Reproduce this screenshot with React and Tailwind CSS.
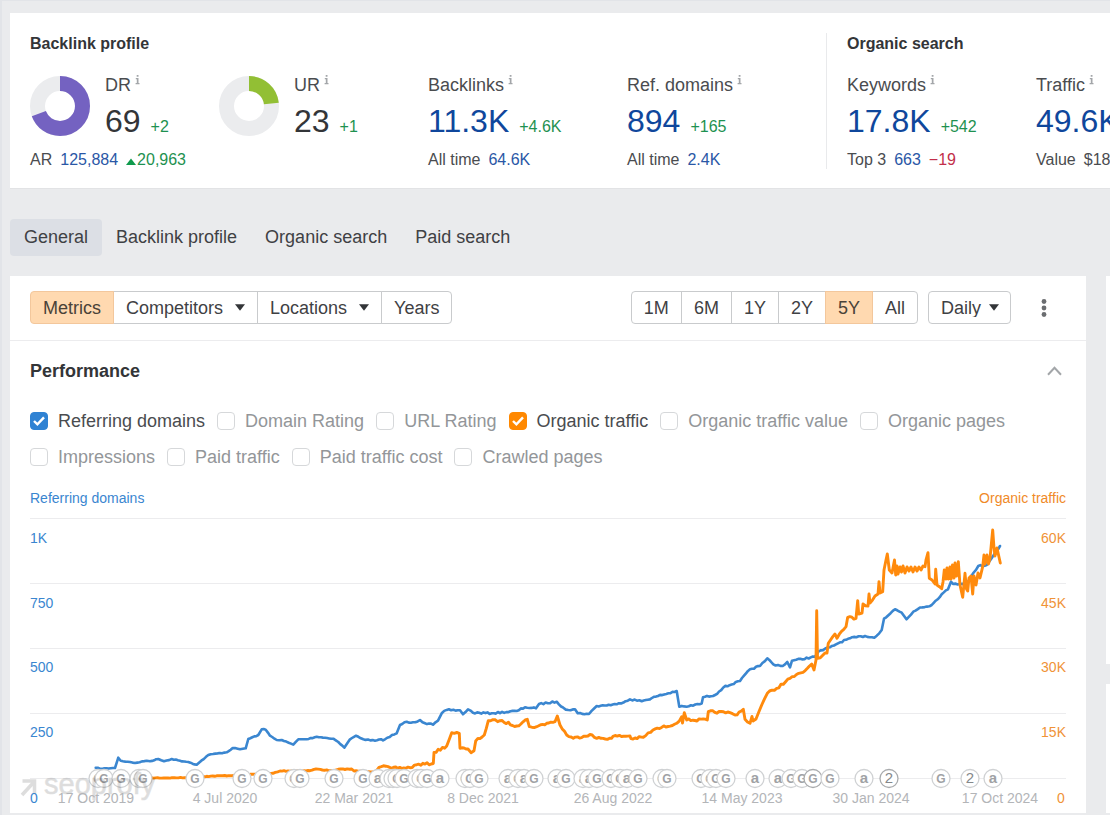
import React from "react";

const BLUE = "#3a86d0";
const ORANGE = "#ff8a0c";

function InfoIcon() {
  return (
    <svg className="h-[10px] w-[5px] shrink-0" viewBox="0 0 5 10" aria-hidden="true">
      <path d="M1.7 0h1.8v1.7H1.7zM0.8 3h2.7v5h1v1.3H0.6V8h1.2V4.3h-1z" fill="#a3a6a9" />
    </svg>
  );
}

function Donut({ value, color }) {
  const r = 22.5;
  const c = 2 * Math.PI * r;
  return (
    <svg className="mt-px size-[60px] shrink-0" viewBox="0 0 60 60" aria-hidden="true">
      <circle cx="30" cy="30" r={r} fill="none" stroke="#ebecee" strokeWidth="15" />
      <circle
        cx="30"
        cy="30"
        r={r}
        fill="none"
        stroke={color}
        strokeWidth="15"
        strokeDasharray={`${(c * value) / 100} ${c}`}
        transform="rotate(-90 30 30)"
      />
    </svg>
  );
}

function Metric({ label, value, delta, link }) {
  return (
    <div>
      <div className="flex gap-1 text-lg leading-5 text-[#4a4c4f]">
        <span>{label}</span>
        <InfoIcon />
      </div>
      <div className="mt-[6px] flex items-baseline gap-[10px] leading-10">
        {link ? (
          <a href="#" className="text-[32px] text-[#0f479c]">{value}</a>
        ) : (
          <span className="text-[32px] text-[#333538]">{value}</span>
        )}
        {delta && <span className="text-base text-[#1e9150]">{delta}</span>}
      </div>
    </div>
  );
}

function Foot({ children }) {
  return (
    <div className="mt-[10px] flex items-baseline gap-2 whitespace-nowrap text-base leading-[18px] text-[#4a4c4f]">
      {children}
    </div>
  );
}

function Caret() {
  return (
    <svg className="h-[7px] w-[10px] shrink-0" viewBox="0 0 10 7" aria-hidden="true">
      <path d="M0 0.3h10L5 6.7z" fill="#333538" />
    </svg>
  );
}

function SegButton({ active, caret, children }) {
  return (
    <button
      type="button"
      className={
        "-ml-px flex h-[33px] items-center gap-3 border px-3 text-lg leading-none first:ml-0 first:rounded-l last:rounded-r " +
        (active
          ? "z-10 border-[#f3c79c] bg-[#ffd9b0] text-[#4a4238]"
          : "border-[#c9cbcd] bg-white text-[#3f4144]")
      }
    >
      {children}
      {caret && <Caret />}
    </button>
  );
}

function Check({ id, label, color }) {
  return (
    <div className="flex items-center gap-[10px]">
      <span className="relative flex">
        <input
          id={id}
          type="checkbox"
          defaultChecked={Boolean(color)}
          className={
            "size-[18px] appearance-none rounded border border-[#d6d8da] bg-white " +
            (color === "blue"
              ? "checked:border-[#2f82d3] checked:bg-[#2f82d3]"
              : "checked:border-[#ff8800] checked:bg-[#ff8800]")
          }
        />
        {color && (
          <svg className="pointer-events-none absolute inset-0 size-[18px]" viewBox="0 0 18 18" aria-hidden="true">
            <path d="M4 9l3.4 3.4 6.6-7" fill="none" stroke="#fff" strokeWidth="2.4" />
          </svg>
        )}
      </span>
      <label
        htmlFor={id}
        className={"text-lg leading-9 " + (color ? "text-[#4a4c4f]" : "text-[#939699]")}
      >
        {label}
      </label>
    </div>
  );
}

const domains = [
  95.7, 767.7, 100, 768.7, 115, 768, 118.3, 757.7, 120.7, 760.7, 130, 762, 135, 763, 146.7, 760.7, 150, 761.3,
  158.3, 759, 164, 761.3, 171.7, 759, 180, 760.7, 188.3, 762, 196.7, 764.7, 208.3, 755, 213, 754, 226.7, 752.3,
  232.7, 748, 240, 749.3, 245.7, 748.3, 248.3, 739, 258.3, 735, 261.7, 729.3, 265.7, 729.7, 270, 735.7,
  276.7, 740, 281.7, 740, 293.3, 744.7, 298.3, 739.3, 306.7, 739.3, 316.7, 736.7, 333.3, 738.7, 338.3, 742,
  344.3, 747.7, 350, 739.3, 356, 735.7, 363.3, 739.3, 375, 740.7, 385, 739.3, 396.7, 733.3, 400, 725,
  406.7, 721.7, 413, 722.3, 420, 720, 425, 723.3, 433, 724.7, 438, 720.7, 441.7, 713.3, 446.7, 709.9,
  460, 710.3, 463, 714.3, 468, 709.3, 473, 712.7, 491.7, 713.3, 516.7, 711, 525, 707.3, 536, 708.3, 539, 704,
  556.7, 701.7, 563.3, 707.7, 568.3, 710, 575, 709.3, 577.7, 713.3, 589, 714, 596.7, 706, 616.7, 704.3,
  630, 699.3, 641.7, 701.3, 658, 696, 676.7, 691, 679.3, 706.7, 686.7, 706.7, 701.7, 703.5, 703, 697.3,
  715, 695, 723.3, 687.5, 740, 681, 750, 669.3, 760, 666, 767.3, 658.3, 773.3, 664.3, 782.7, 666,
  787.3, 662, 790, 667.3, 792, 660.7, 815, 656.7, 818.3, 651.7, 830, 647.3, 840, 642.3, 850, 638.3,
  865, 636, 874.3, 637.7, 881.7, 630, 884, 618.7, 895, 609.3, 901.7, 612.7, 906.5, 619.3, 913.3, 611.7,
  920, 607.5, 931.7, 605, 941.7, 594.3, 948, 589.3, 951, 581.7, 953, 584, 966.7, 583.3, 978.3, 566,
  986.7, 565, 1000, 546,
];

const traffic = [
  143, 778, 186.7, 777.7, 206.7, 776.3, 236.7, 775.3, 273, 773.3, 280, 771, 310, 770.7, 316, 769, 333, 771,
  338.3, 769.3, 351.7, 769, 354, 771, 375, 771.7, 379, 767.3, 388, 766.7, 391.7, 768.3, 410, 767.7,
  416.7, 764.7, 433.3, 763.5, 434, 752.5, 446.7, 746, 451.7, 732.7, 459.3, 733.3, 460, 748.3, 468, 749,
  471, 752.7, 474, 750.7, 475.7, 741, 484.3, 735, 488.3, 720.7, 500, 720.7, 516.7, 726, 527.3, 719.3,
  529.3, 726.7, 536.7, 726.7, 546.7, 723.3, 555, 721.7, 557.3, 716, 560, 725, 566.7, 735, 573.3, 738.3,
  590, 734.5, 596.7, 738.3, 611.7, 738.3, 613, 736.3, 630, 736, 631, 738.7, 643.3, 737.3, 653, 730,
  676.7, 723.3, 681.7, 716.7, 682.5, 723, 684.3, 712.7, 686.7, 720, 707.3, 720, 708.3, 711.7, 730, 712.7,
  735, 715, 743.3, 709.3, 745, 719.3, 750, 723.3, 752, 716.5, 753, 721, 756, 719, 761.7, 705, 767.3, 693.3,
  776.7, 688.3, 790, 678.3, 803, 672.3, 811.7, 664, 814, 670, 816, 660, 816.7, 610.7, 817.5, 658.3,
  823, 655, 827, 653, 828.3, 643.3, 835, 634, 837, 638.3, 846, 626.7, 847.7, 617.3, 856, 618.3,
  857.7, 600.7, 858.7, 614, 862, 613, 863, 604, 868, 606, 869, 594, 870, 603, 875, 596, 878, 594, 879, 581.7,
  880, 593, 882.7, 591.7, 884, 570, 886, 560, 887.3, 554, 889.3, 570, 892, 573, 894.5, 560, 895.7, 575,
  897, 566, 898, 574, 900, 567, 901.5, 572, 903, 566, 905, 573, 907, 567, 909, 571, 911, 567, 913, 572,
  915, 567, 917, 571, 919, 567, 921, 570, 923, 566, 925, 566.7, 926, 560, 928, 552.7,
  929.3, 578.3, 932, 580, 935, 584, 935.7, 569.3, 937, 585, 941.7, 588.7, 943, 582, 944.3, 570, 946, 579,
  947, 568, 948.5, 579, 950, 567, 951, 579, 952.5, 565, 954, 578, 955, 563, 956.5, 576, 958.3, 561.7,
  960, 585, 962.7, 597.3, 965, 573.3, 966.5, 589, 967.7, 591, 969, 578, 971, 576, 972.7, 594, 974, 576,
  976, 585, 978, 573, 980, 578, 982.7, 566.7, 984, 555, 985, 564, 987, 555, 988.5, 564, 990, 558.3,
  992.7, 530, 994, 548, 995, 556, 997, 548, 1000.3, 563,
];

// Subdivides a flat x,y list and adds a small repeatable ripple between the points.
function toPath(flat, ripple) {
  let seed = 7;
  const out = [];
  for (let i = 0; i < flat.length; i += 2) {
    const x = flat[i];
    const y = flat[i + 1];
    if (i > 0) {
      const px = flat[i - 2];
      const py = flat[i - 1];
      const steps = Math.floor((x - px) / 2);
      for (let s = 1; s < steps; s++) {
        seed = (seed * 16807) % 2147483647;
        const j = (seed / 2147483647 - 0.5) * 2 * (px < 370 ? 0.4 : ripple);
        const t = s / steps;
        out.push(`${(px + (x - px) * t).toFixed(1)},${(py + (y - py) * t + j).toFixed(1)}`);
      }
    }
    out.push(`${x},${y}`);
  }
  return out.join(" ");
}

const markers = [
  [98, "G"], [104, "G"], [121, "G"], [139, "G"], [143, "G"], [195, "G"], [242, "G"], [263, "G"],
  [294, "G"], [300, "G"], [334, "G"], [363, "G"], [378, "a"], [389, "G"], [393, "G"], [397, "G"], [404, "G"],
  [417, "G"], [421, "G"], [427, "G"], [440, "a"], [465, "G"], [470, "G"], [479, "G"], [508, "a"],
  [518, "G"], [524, "a"], [534, "G"], [557, "a"], [566, "G"], [583, "a"], [589, "a"], [597, "G"],
  [611, "G"], [620, "G"], [627, "a"], [638, "G"], [662, "G"], [667, "G"], [701, "G"], [710, "G"],
  [716, "G"], [726, "G"], [755, "a"], [778, "a"], [791, "G"], [802, "G"], [813, "G", 1], [830, "G"],
  [864, "a"], [889, "2", 1], [941, "G"], [970, "2"], [993, "a"],
];

const dates = [
  [96, "17 Oct 2019"], [225, "4 Jul 2020"], [354, "22 Mar 2021"], [483, "8 Dec 2021"],
  [613, "26 Aug 2022"], [742, "14 May 2023"], [871, "30 Jan 2024"], [1000, "17 Oct 2024"],
];

const rows = [
  [543, "1K", "60K"], [608, "750", "45K"], [672, "500", "30K"], [737, "250", "15K"],
];

function Chart() {
  return (
    <svg className="block w-full overflow-visible" viewBox="30 510 1036 298" role="img" aria-label="Performance over time" fontSize="14">
      {[518.5, 583.5, 648.5, 713.5, 778.5].map((y) => (
        <path key={y} d={`M30 ${y}H1066`} stroke="#ececee" />
      ))}
      <g fill="none" strokeLinejoin="round" strokeLinecap="round">
        <polyline points={toPath(domains, 0.8)} stroke={BLUE} strokeWidth="2.6" />
        <polyline points={toPath(traffic, 1.2)} stroke={ORANGE} strokeWidth="2.9" />
      </g>
      {markers.map(([x, ch, dark]) => (
        <g key={x}>
          <circle cx={x} cy="778.5" r="9" fill="#fff" stroke={dark ? "#a9abad" : "#cfd1d3"} strokeWidth="1.3" />
          <text
            x={x}
            y="782.5"
            textAnchor="middle"
            fontSize={ch === "G" ? 12 : 15}
            fontWeight={ch === "2" ? "normal" : "bold"}
            fill={ch === "2" ? "#85888b" : "#a0a2a5"}
          >
            {ch}
          </text>
        </g>
      ))}
      <g opacity="0.13">
        <path d="M22 795L34 782M22.5 781H34.5V794" fill="none" stroke="#000" strokeWidth="3.5" />
        <text x="44" y="794" fontSize="29" fill="#000" stroke="#000" strokeWidth="0.6">seoprofy</text>
      </g>
      {rows.map(([y, left, right]) => (
        <g key={y}>
          <text x="30" y={y} fill={BLUE}>{left}</text>
          <text x="1066" y={y} textAnchor="end" fill="#f09337">{right}</text>
        </g>
      ))}
      <text x="30" y="803" fill={BLUE}>0</text>
      <text x="1057" y="803" fill="#f09337">0</text>
      <g fill="#b3b5b8" textAnchor="middle">
        {dates.map(([x, t]) => (
          <text key={t} x={x} y="803">{t}</text>
        ))}
      </g>
    </svg>
  );
}

export default function App() {
  return (
    <div className="min-h-screen overflow-x-hidden border-l-2 border-t border-[#e2e4e8] bg-[#eaebed] pb-px font-['Liberation_Sans',Arial,sans-serif] text-[#333538]">
      <section className="ml-2 mt-3 flex overflow-hidden border-b border-[#e2e3e5] bg-white px-5 pb-[19px] pt-5">
        <div className="shrink-0 border-r border-[#e9eaec]">
          <h2 className="text-base font-bold leading-[22px]">Backlink profile</h2>
          <div className="mt-5 flex">
            <div className="w-[189px]">
              <div className="flex gap-[15px]">
                <Donut value={69} color="#7462c1" />
                <Metric label="DR" value="69" delta="+2" />
              </div>
              <Foot>
                <span>AR</span>
                <span className="flex items-baseline gap-2">
                  <a href="#" className="text-[#2a57a6]">125,884</a>
                  <span className="flex items-baseline gap-px text-[#1e9150]">
                    <svg className="h-[7px] w-[10px]" viewBox="0 0 10 7" aria-hidden="true">
                      <path d="M0 7h10L5 0.5z" fill="#0f9a4c" />
                    </svg>
                    20,963
                  </span>
                </span>
              </Foot>
            </div>
            <div className="flex w-[209px] gap-[15px]">
              <Donut value={23} color="#92bf34" />
              <Metric label="UR" value="23" delta="+1" />
            </div>
            <div className="w-[199px]">
              <Metric label="Backlinks" value="11.3K" delta="+4.6K" link />
              <Foot>
                <span>All time</span>
                <a href="#" className="text-[#2a57a6]">64.6K</a>
              </Foot>
            </div>
            <div className="w-[199px]">
              <Metric label="Ref. domains" value="894" delta="+165" link />
              <Foot>
                <span>All time</span>
                <a href="#" className="text-[#2a57a6]">2.4K</a>
              </Foot>
            </div>
          </div>
        </div>
        <div className="shrink-0 pl-5">
          <h2 className="text-base font-bold leading-[22px]">Organic search</h2>
          <div className="mt-5 flex">
            <div className="w-[189px]">
              <Metric label="Keywords" value="17.8K" delta="+542" link />
              <Foot>
                <span>Top 3</span>
                <a href="#" className="text-[#2a57a6]">663</a>
                <span className="text-[#c22f4a]">−19</span>
              </Foot>
            </div>
            <div>
              <Metric label="Traffic" value="49.6K" link />
              <Foot>
                <span>Value</span>
                <span>$18.2K</span>
              </Foot>
            </div>
          </div>
        </div>
      </section>

      <nav className="ml-2 mt-[30px] flex text-lg leading-[37px] text-[#3f4144]">
        <a href="#" aria-current="page" className="rounded bg-[#dcdfe5] px-[14px]">General</a>
        <a href="#" className="px-[14px]">Backlink profile</a>
        <a href="#" className="px-[14px]">Organic search</a>
        <a href="#" className="px-[14px]">Paid search</a>
      </nav>

      <div className="ml-2 mt-5 flex gap-5">
        <main className="min-w-0 flex-1 bg-white">
          <div className="flex items-center justify-between border-b border-[#ececee] px-5 pb-4 pt-[15px]">
            <div className="flex">
              <SegButton active>Metrics</SegButton>
              <SegButton caret>Competitors</SegButton>
              <SegButton caret>Locations</SegButton>
              <SegButton>Years</SegButton>
            </div>
            <div className="flex items-center">
              <div className="flex">
                <SegButton>1M</SegButton>
                <SegButton>6M</SegButton>
                <SegButton>1Y</SegButton>
                <SegButton>2Y</SegButton>
                <SegButton active>5Y</SegButton>
                <SegButton>All</SegButton>
              </div>
              <div className="relative ml-[10px] flex items-center">
                <select
                  aria-label="Interval"
                  className="h-[33px] w-[83px] appearance-none rounded border border-[#c9cbcd] bg-white pl-3 text-lg leading-none text-[#3f4144]"
                >
                  <option>Daily</option>
                  <option>Weekly</option>
                  <option>Monthly</option>
                </select>
                <span className="pointer-events-none absolute right-3">
                  <Caret />
                </span>
              </div>
              <button type="button" aria-label="More options" className="ml-5 mr-[10px] flex h-[33px] w-[25px] items-center justify-center">
                <svg className="h-[18px] w-[6px]" viewBox="0 0 6 18" fill="#6b6d70" aria-hidden="true">
                  <circle cx="3" cy="2.5" r="2.4" />
                  <circle cx="3" cy="9" r="2.4" />
                  <circle cx="3" cy="15.5" r="2.4" />
                </svg>
              </button>
            </div>
          </div>

          <div className="px-5 pt-[19px]">
            <div className="flex items-center justify-between">
              <h2 className="text-lg font-bold leading-[22px]">Performance</h2>
              <button type="button" aria-label="Collapse" className="mr-1 flex">
                <svg className="h-[10px] w-[15px]" viewBox="0 0 15 10" aria-hidden="true">
                  <path d="M1 8.7l6.5-7 6.5 7" fill="none" stroke="#a3a6a9" strokeWidth="2" />
                </svg>
              </button>
            </div>
            <div className="mt-[21px] flex flex-wrap gap-x-3">
              <Check id="rd" label="Referring domains" color="blue" />
              <Check id="dr" label="Domain Rating" />
              <Check id="ur" label="URL Rating" />
              <Check id="ot" label="Organic traffic" color="orange" />
              <Check id="otv" label="Organic traffic value" />
              <Check id="op" label="Organic pages" />
              <Check id="im" label="Impressions" />
              <Check id="pt" label="Paid traffic" />
              <Check id="ptc" label="Paid traffic cost" />
              <Check id="cp" label="Crawled pages" />
            </div>
            <div className="mt-[14px] flex justify-between text-sm leading-[18px]">
              <span className="text-[#3a86d0]">Referring domains</span>
              <span className="text-[#f08a28]">Organic traffic</span>
            </div>
            <div className="mt-[3px] pb-[5px]">
              <Chart />
            </div>
          </div>
        </main>
        <aside className="flex w-1 shrink-0 flex-col gap-5">
          <div className="flex-3 bg-white" />
          <div className="flex-1 bg-white" />
        </aside>
      </div>
    </div>
  );
}
